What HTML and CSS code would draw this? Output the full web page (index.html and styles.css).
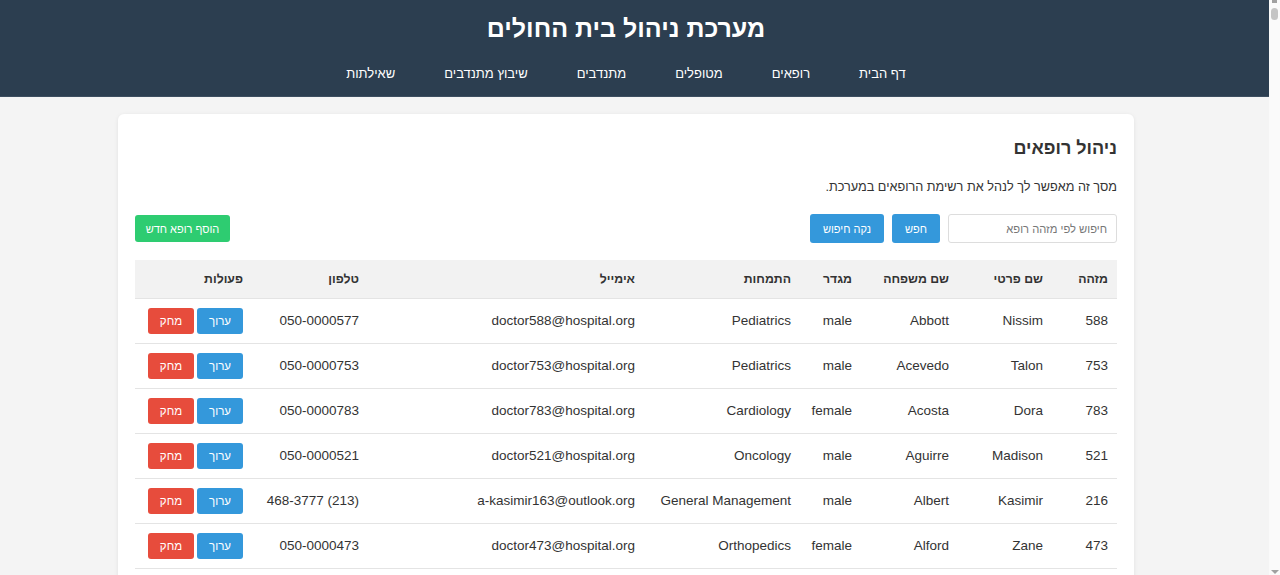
FILE: index.html
```html
<!DOCTYPE html>
<html lang="he" dir="rtl">
<head>
<meta charset="utf-8">
<title>מערכת ניהול בית החולים</title>
<link rel="stylesheet" href="styles.css">
</head>
<body>
<div class="app">
  <header class="topbar">
    <div class="topbar-inner">
      <h1 class="site-title">מערכת ניהול בית החולים</h1>
      <nav class="nav">
        <a class="nav-link" href="#">דף הבית</a>
        <a class="nav-link" href="#">רופאים</a>
        <a class="nav-link" href="#">מטופלים</a>
        <a class="nav-link" href="#">מתנדבים</a>
        <a class="nav-link" href="#">שיבוץ מתנדבים</a>
        <a class="nav-link" href="#">שאילתות</a>
      </nav>
    </div>
  </header>
  <main class="main">
    <section class="card">
      <h2 class="card-title">ניהול רופאים</h2>
      <p class="card-desc">מסך זה מאפשר לך לנהל את רשימת הרופאים במערכת.</p>
      <div class="toolbar">
        <div class="search">
          <input class="search-input" type="text" placeholder="חיפוש לפי מזהה רופא">
          <button class="btn btn-blue btn-md">חפש</button>
          <button class="btn btn-blue btn-md">נקה חיפוש</button>
        </div>
        <button class="btn btn-green">הוסף רופא חדש</button>
      </div>
      <table class="grid">
        <colgroup>
          <col class="c-id"><col class="c-first"><col class="c-last"><col class="c-gender"><col class="c-spec"><col class="c-email"><col class="c-phone"><col class="c-act">
        </colgroup>
        <thead>
          <tr><th>מזהה</th><th>שם פרטי</th><th>שם משפחה</th><th>מגדר</th><th>התמחות</th><th>אימייל</th><th>טלפון</th><th>פעולות</th></tr>
        </thead>
        <tbody>
          <tr><td>588</td><td>Nissim</td><td>Abbott</td><td>male</td><td>Pediatrics</td><td>doctor588@hospital.org</td><td>050-0000577</td><td><div class="acts"><button class="btn btn-blue btn-sm">ערוך</button><button class="btn btn-red btn-sm">מחק</button></div></td></tr>
          <tr><td>753</td><td>Talon</td><td>Acevedo</td><td>male</td><td>Pediatrics</td><td>doctor753@hospital.org</td><td>050-0000753</td><td><div class="acts"><button class="btn btn-blue btn-sm">ערוך</button><button class="btn btn-red btn-sm">מחק</button></div></td></tr>
          <tr><td>783</td><td>Dora</td><td>Acosta</td><td>female</td><td>Cardiology</td><td>doctor783@hospital.org</td><td>050-0000783</td><td><div class="acts"><button class="btn btn-blue btn-sm">ערוך</button><button class="btn btn-red btn-sm">מחק</button></div></td></tr>
          <tr><td>521</td><td>Madison</td><td>Aguirre</td><td>male</td><td>Oncology</td><td>doctor521@hospital.org</td><td>050-0000521</td><td><div class="acts"><button class="btn btn-blue btn-sm">ערוך</button><button class="btn btn-red btn-sm">מחק</button></div></td></tr>
          <tr><td>216</td><td>Kasimir</td><td>Albert</td><td>male</td><td>General Management</td><td>a-kasimir163@outlook.org</td><td>(213) 468-3777</td><td><div class="acts"><button class="btn btn-blue btn-sm">ערוך</button><button class="btn btn-red btn-sm">מחק</button></div></td></tr>
          <tr><td>473</td><td>Zane</td><td>Alford</td><td>female</td><td>Orthopedics</td><td>doctor473@hospital.org</td><td>050-0000473</td><td><div class="acts"><button class="btn btn-blue btn-sm">ערוך</button><button class="btn btn-red btn-sm">מחק</button></div></td></tr>
        </tbody>
      </table>
    </section>
  </main>
</div>
<div class="scrollbar"><div class="sb-up"></div><div class="sb-thumb"></div><div class="sb-down"></div></div>
</body>
</html>
```
FILE: styles.css
```css
html, body {
  margin: 0;
  padding: 0;
}
body {
  background: #f4f4f4;
  font-family: "Liberation Sans", Arial, "DejaVu Sans", sans-serif;
  color: #333;
  overflow: hidden;
}
.app {
  width: 1269px;
  margin-left: 0;
  margin-right: auto;
}
.topbar {
  background: #2c3e50;
  height: 97px;
  border-bottom: 1px solid #3d4e60;
  box-sizing: border-box;
}
.topbar-inner {
  width: 1252px;
  margin-left: 0;
  margin-right: auto;
  display: flex;
  flex-direction: column;
  align-items: center;
}
.site-title {
  margin: 0;
  padding-top: 12px;
  color: #fff;
  font-size: 25px;
  line-height: 32px;
  font-weight: bold;
}
.nav {
  display: flex;
  gap: 49px;
  margin-top: 22px;
}
.nav-link {
  color: #fff;
  text-decoration: none;
  font-size: 13px;
  line-height: 16px;
  font-weight: 500;
}
.main {
  width: 1252px;
  margin-left: 0;
  margin-right: auto;
  padding-top: 17px;
}
.card {
  width: 1016px;
  margin: 0 auto;
  background: #fff;
  border-radius: 6px;
  box-shadow: 0 1px 4px rgba(0,0,0,0.08);
  padding: 22px 17px 40px;
  box-sizing: border-box;
}
.card-title {
  margin: 0;
  font-size: 18px;
  line-height: 24px;
  font-weight: bold;
  color: #333;
}
.card-desc {
  margin: 19px 0 0;
  font-size: 12.7px;
  line-height: 17px;
}
.toolbar {
  margin-top: 18px;
  display: flex;
  justify-content: space-between;
  align-items: center;
}
.search {
  display: flex;
  gap: 8px;
  align-items: center;
}
.search-input {
  width: 169px;
  height: 29px;
  box-sizing: border-box;
  border: 1px solid #ddd;
  border-radius: 3px;
  padding: 0 9px;
  font-family: inherit;
  font-size: 11.2px;
  color: #333;
  direction: rtl;
}
.search-input::placeholder {
  color: #777;
}
.btn {
  border: none;
  color: #fff;
  font-family: inherit;
  border-radius: 3px;
  cursor: pointer;
}
.btn-md {
  height: 29px;
  padding: 0 13px;
  font-size: 11px;
}
.btn-sm {
  width: 46px;
  height: 26px;
  padding: 0;
  font-size: 11.5px;
}
.btn-blue { background: #3498db; }
.btn-red { background: #e74c3c; }
.btn-green {
  background: #2ecc71;
  height: 27px;
  width: 95px;
  padding: 0;
  font-size: 11px;
}
.grid {
  margin-top: 17px;
  width: 982px;
  border-collapse: collapse;
  table-layout: fixed;
}
.c-id { width: 65px; }
.c-first { width: 94px; }
.c-last { width: 97px; }
.c-gender { width: 61px; }
.c-spec { width: 156px; }
.c-email { width: 276px; }
.c-phone { width: 116px; }
.c-act { width: 117px; }
.grid th, .grid td {
  text-align: right;
  padding: 0 9px;
  border-bottom: 1px solid #e4e4e4;
  white-space: nowrap;
}
.grid th {
  background: #f2f2f2;
  height: 38px;
  font-size: 12.3px;
  font-weight: bold;
  color: #333;
  box-sizing: border-box;
}
.grid td {
  height: 45px;
  font-size: 13.5px;
  color: #333;
  box-sizing: border-box;
}
.acts {
  display: flex;
  gap: 3px;
}
.scrollbar {
  position: fixed;
  top: 0;
  right: 0;
  width: 11px;
  height: 100%;
  background: #fafafa;
}
.sb-up {
  position: absolute;
  top: 0;
  left: 3px;
  width: 5px;
  height: 3px;
  background: #a0a0a0;
}
.sb-thumb {
  position: absolute;
  top: 8px;
  left: 2px;
  width: 7px;
  height: 12px;
  border-radius: 4px;
  background: #c4c4c4;
}
.sb-down {
  position: absolute;
  bottom: 1px;
  left: 2px;
  width: 0;
  height: 0;
  border-left: 4px solid transparent;
  border-right: 4px solid transparent;
  border-top: 4px solid #a0a0a0;
}
```
